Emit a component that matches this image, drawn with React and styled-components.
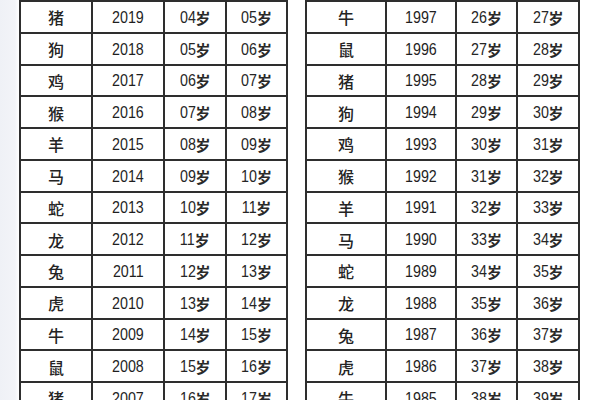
import React from "react";
import styled, { createGlobalStyle } from "styled-components";

const GlobalStyle = createGlobalStyle`
  html, body {
    margin: 0;
    padding: 0;
    background: #ffffff;
  }
  body {
    font-family: "Liberation Sans", "Noto Sans CJK SC", sans-serif;
  }
`;

const Page = styled.div`
  width: 600px;
  height: 400px;
  overflow: hidden;
  display: flex;
  align-items: flex-start;
  gap: 17px;
  padding-left: 19px;
  box-sizing: border-box;
  background: linear-gradient(to right, #eff1f6 0, #f3f4f8 15px, #ffffff 19px);
`;

const Table = styled.div`
  display: grid;
  grid-template-columns: ${(props) => props.$cols};
  grid-auto-rows: 31.75px;
  border-top: 2px solid #2e2e2e;
  border-left: 2px solid #2e2e2e;
  background: #ffffff;
`;

const Cell = styled.div`
  box-sizing: border-box;
  border-right: 2px solid #2e2e2e;
  border-bottom: 2px solid #2e2e2e;
  display: flex;
  align-items: center;
  justify-content: center;
  color: #1f1f1f;
  line-height: 1;
  padding-top: 1px;
`;

const Zodiac = styled.span`
  font-family: "Noto Sans CJK SC", sans-serif;
  font-weight: 500;
  font-size: 16px;
  color: #242424;
`;

const Narrow = styled.span`
  display: inline-block;
  font-family: "Liberation Sans", sans-serif;
  font-size: 17px;
  transform: scaleX(0.84);
  transform-origin: ${(props) => (props.$origin ? props.$origin : "center")};
`;

const Age = styled.span`
  display: flex;
  align-items: center;
  color: #262626;
  margin-left: -3px;
`;

const Sui = styled.span`
  font-family: "Noto Sans CJK SC", sans-serif;
  font-weight: 700;
  font-size: 15px;
  color: #2a2a2a;
`;

const animals = ["猪", "狗", "鸡", "猴", "羊", "马", "蛇", "龙", "兔", "虎", "牛", "鼠"];

const pad = (n) => String(n).padStart(2, "0");

const leftRows = Array.from({ length: 13 }, (_, i) => ({
  animal: animals[i % 12],
  year: 2019 - i,
  age: 4 + i,
}));

const rightAnimals = ["牛", "鼠", "猪", "狗", "鸡", "猴", "羊", "马", "蛇", "龙", "兔", "虎", "牛"];

const rightRows = rightAnimals.map((animal, i) => ({
  animal,
  year: 1997 - i,
  age: 26 + i,
}));

function AgeLabel({ value }) {
  return (
    <Age>
      <Narrow $origin="right">{pad(value)}</Narrow>
      <Sui>岁</Sui>
    </Age>
  );
}

function ZodiacTable({ rows, cols }) {
  return (
    <Table $cols={cols}>
      {rows.map((row) => (
        <React.Fragment key={row.year}>
          <Cell>
            <Zodiac>{row.animal}</Zodiac>
          </Cell>
          <Cell>
            <Narrow>{row.year}</Narrow>
          </Cell>
          <Cell>
            <AgeLabel value={row.age} />
          </Cell>
          <Cell>
            <AgeLabel value={row.age + 1} />
          </Cell>
        </React.Fragment>
      ))}
    </Table>
  );
}

export default function App() {
  return (
    <>
      <GlobalStyle />
      <Page>
        <ZodiacTable rows={leftRows} cols="72px 72px 62px 61px" />
        <ZodiacTable rows={rightRows} cols="80px 70px 61px 62px" />
      </Page>
    </>
  );
}
